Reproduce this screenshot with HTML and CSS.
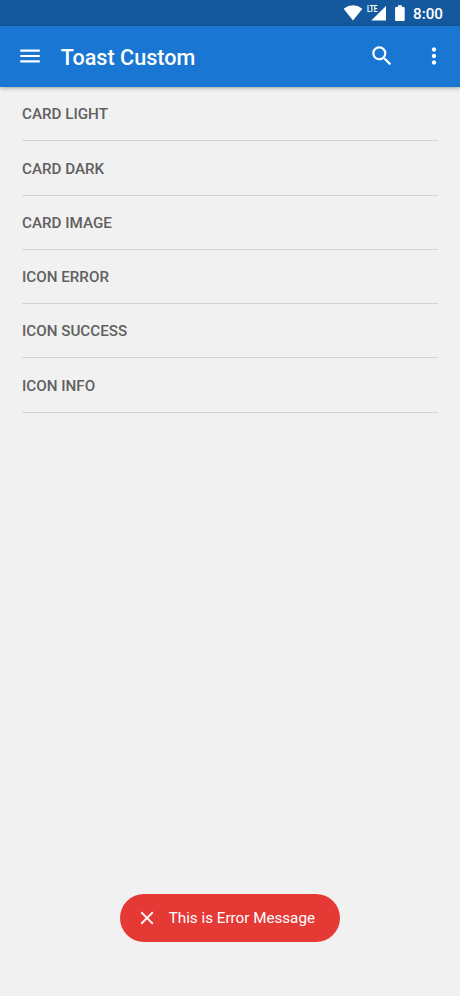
FILE: index.html
```html
<!DOCTYPE html>
<html lang="en">
<head>
<meta charset="utf-8">
<title>Toast Custom</title>
<link rel="stylesheet" href="styles.css">
</head>
<body>
<div class="screen">
  <div class="status">
    <svg class="status-icons" viewBox="0 0 64 26" aria-hidden="true">
      <path d="M.6 8.7Q10 2 19.4 8.7L10 20.5Z"/>
      <path d="M43 6v14.5H28.3L35.2 13.8V13.3H35.7Z"/>
      <path d="M53 7.1h1.9V5.2h4v1.9h1.9q.9 0 .9.9v12q0 .9-.9.9H53q-.9 0-.9-.9V8q0-.9.9-.9Z"/>
      <text class="lte" x="24" y="12.4" textLength="10.5" lengthAdjust="spacingAndGlyphs">LTE</text>
    </svg>
    <span class="clock">8:00</span>
  </div>
  <header class="appbar">
    <svg class="icon" viewBox="0 0 24 24" aria-hidden="true"><path d="M3 18h18v-2H3v2zm0-5h18v-2H3v2zm0-7v2h18V6H3z"/></svg>
    <h1 class="title">Toast Custom</h1>
    <svg class="icon search" viewBox="0 0 24 24" aria-hidden="true"><path d="M15.5 14h-.79l-.28-.27A6.471 6.471 0 0 0 16 9.5 6.5 6.5 0 1 0 9.5 16c1.61 0 3.09-.59 4.23-1.57l.27.28v.79l5 4.99L20.49 19l-4.99-5zm-6 0C7.01 14 5 11.99 5 9.5S7.01 5 9.5 5 14 7.01 14 9.5 11.99 14 9.5 14z"/></svg>
    <svg class="icon" viewBox="0 0 24 24" aria-hidden="true"><path d="M12 8c1.1 0 2-.9 2-2s-.9-2-2-2-2 .9-2 2 .9 2 2 2zm0 2c-1.1 0-2 .9-2 2s.9 2 2 2 2-.9 2-2-.9-2-2-2zm0 6c-1.1 0-2 .9-2 2s.9 2 2 2 2-.9 2-2-.9-2-2-2z"/></svg>
  </header>
  <main class="list">
    <div class="row">CARD LIGHT</div>
    <div class="row">CARD DARK</div>
    <div class="row">CARD IMAGE</div>
    <div class="row">ICON ERROR</div>
    <div class="row">ICON SUCCESS</div>
    <div class="row">ICON INFO</div>
  </main>
  <div class="toast">
    <svg class="close" viewBox="0 0 24 24" aria-hidden="true"><path d="M19 6.41 17.59 5 12 10.59 6.41 5 5 6.41 10.59 12 5 17.59 6.41 19 12 13.41 17.59 19 19 17.59 13.41 12z"/></svg>
    <span class="message">This is Error Message</span>
  </div>
</div>
</body>
</html>
```
FILE: styles.css
```css
* { box-sizing: border-box; }
body { margin: 0; font-family: Roboto, sans-serif; background: #f1f1f1; }
svg { display: block; fill: #fff; flex: none; }
.screen { width: 460px; height: 996px; display: flex; flex-direction: column; background: #f1f1f1; overflow: hidden; }
.status { height: 26px; flex: none; display: flex; align-items: center; justify-content: flex-end; padding-right: 17px; background: #14599d; color: #fff; }
.status-icons { width: 64px; height: 26px; margin-right: 6px; }
.lte { font-size: 9px; font-weight: 700; }
.clock { font-size: 15.2px; font-weight: 500; line-height: 26px; padding-top: 2px; }
.appbar { height: 60.7px; flex: none; display: flex; align-items: center; padding: 0 13px 0 17.4px; background: #1976d2; color: #fff; box-shadow: 0 1px 4px rgba(0,0,0,.35); }
.icon { width: 26px; height: 26px; }
.title { flex: 1; margin: 0 0 0 17.4px; padding-top: 3px; font-size: 21.6px; font-weight: 500; line-height: 26px; }
.search { margin-right: 26.2px; }
.list { flex: 1; padding: .4px 22px 0; }
.row { height: 54.25px; display: flex; align-items: center; padding-top: 1.3px; border-bottom: 1px solid #d2d2d2; color: #606060; font-size: 15.2px; font-weight: 500; }
.toast { flex: none; align-self: center; display: flex; align-items: center; width: 220.5px; height: 47.5px; margin: 0 0 54.5px; padding-left: 16px; border-radius: 24px; background: #e53935; color: #fff; }
.close { width: 22px; height: 22px; }
.message { margin-left: 11px; font-size: 15.2px; white-space: nowrap; }
```
